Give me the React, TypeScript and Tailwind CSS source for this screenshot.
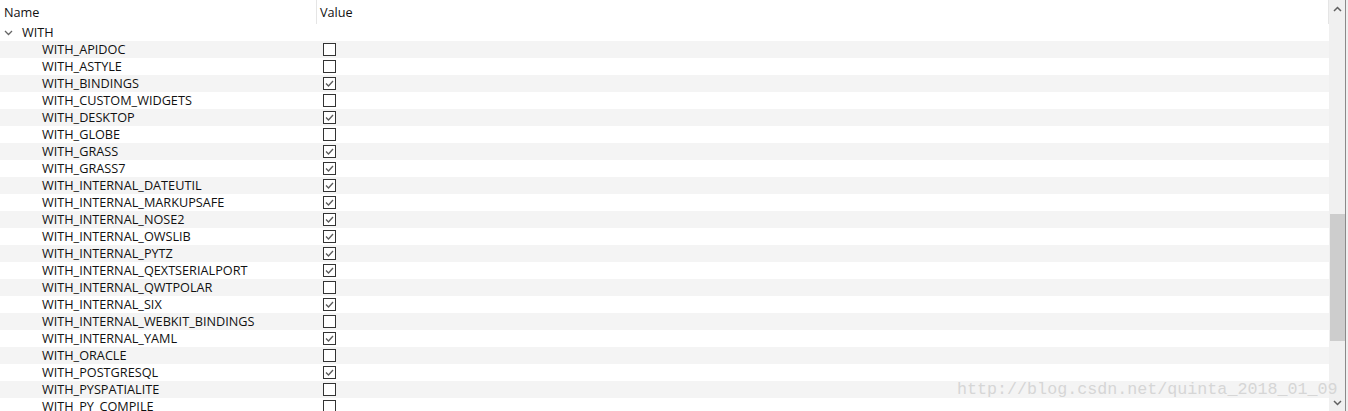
import React from 'react'

const items: [string, boolean][] = [
  ['WITH_APIDOC', false],
  ['WITH_ASTYLE', false],
  ['WITH_BINDINGS', true],
  ['WITH_CUSTOM_WIDGETS', false],
  ['WITH_DESKTOP', true],
  ['WITH_GLOBE', false],
  ['WITH_GRASS', true],
  ['WITH_GRASS7', true],
  ['WITH_INTERNAL_DATEUTIL', true],
  ['WITH_INTERNAL_MARKUPSAFE', true],
  ['WITH_INTERNAL_NOSE2', true],
  ['WITH_INTERNAL_OWSLIB', true],
  ['WITH_INTERNAL_PYTZ', true],
  ['WITH_INTERNAL_QEXTSERIALPORT', true],
  ['WITH_INTERNAL_QWTPOLAR', false],
  ['WITH_INTERNAL_SIX', true],
  ['WITH_INTERNAL_WEBKIT_BINDINGS', false],
  ['WITH_INTERNAL_YAML', true],
  ['WITH_ORACLE', false],
  ['WITH_POSTGRESQL', true],
  ['WITH_PYSPATIALITE', false],
  ['WITH_PY_COMPILE', false],
]

const CheckBox = ({ checked }: { checked: boolean }) => (
  <div className="w-[13px] h-[13px] border border-[#333333] bg-white">
    {checked && (
      <svg width="11" height="11" viewBox="0 0 11 11">
        <path d="M2 5.5 L4.5 8 L9 3" fill="none" stroke="#5a5a5a" strokeWidth="1.3" />
      </svg>
    )}
  </div>
)

const App = () => {
  return (
    <div
      className="relative w-[1348px] h-[411px] overflow-hidden bg-white flex text-[12.7px] leading-[16px] text-[#111]"
      style={{ fontFamily: '"Open Sans", "Noto Sans", sans-serif' }}
    >
      <div className="flex-1 flex flex-col">
        {/* header */}
        <div className="h-[24px] grid grid-cols-[317px_1fr] shrink-0">
          <div className="flex items-center pl-[4px] pb-[1px] border-r border-[#e5e5e5]">Name</div>
          <div className="flex items-center pl-[3px] pb-[1px] border-r border-[#e5e5e5]">Value</div>
        </div>

        {/* parent row */}
        <div className="h-[17px] flex items-center shrink-0">
          <svg width="9" height="6" viewBox="0 0 9 6" className="ml-[4px] mr-[9px]">
            <path d="M1 1 L4.5 4.5 L8 1" fill="none" stroke="#666" strokeWidth="1.3" />
          </svg>
          <span className="pb-[1px]">WITH</span>
        </div>

        {items.map(([name, checked], i) => (
          <div
            key={name}
            className={`h-[17px] grid grid-cols-[317px_1fr] grid-rows-[17px] shrink-0 ${i % 2 === 0 ? 'bg-[#f4f4f4]' : 'bg-white'}`}
          >
            <div className="flex items-center pl-[42px] pb-[1px]">{name}</div>
            <div className="flex items-center pl-[6px]">
              <CheckBox checked={checked} />
            </div>
          </div>
        ))}
      </div>

      {/* scrollbar */}
      <div className="w-[16px] bg-[#f0f0f0] flex flex-col items-center shrink-0">
        <div className="h-[17px] flex items-center justify-center">
          <svg width="9" height="6" viewBox="0 0 9 6">
            <path d="M1 5 L4.5 1.5 L8 5" fill="none" stroke="#606060" strokeWidth="1.5" />
          </svg>
        </div>
        <div className="h-[197px]" />
        <div className="w-[15px] h-[127px] bg-[#cdcdcd]" />
        <div className="flex-1" />
        <div className="h-[17px] flex items-center justify-center">
          <svg width="9" height="6" viewBox="0 0 9 6">
            <path d="M1 1 L4.5 4.5 L8 1" fill="none" stroke="#606060" strokeWidth="1.5" />
          </svg>
        </div>
      </div>
      <div className="w-[1px] bg-[#8a8a8a] shrink-0" />
      <div className="w-[2px] bg-[#f0f0f0] shrink-0" />

      {/* watermark */}
      <div
        className="absolute left-[957px] top-[378px] text-[16.7px] leading-[24px] text-[#d6d6d6] whitespace-nowrap pointer-events-none"
        style={{ fontFamily: '"Liberation Mono", monospace' }}
      >
        http://blog.csdn.net/quinta_2018_01_09
      </div>
    </div>
  )
}

export default App
